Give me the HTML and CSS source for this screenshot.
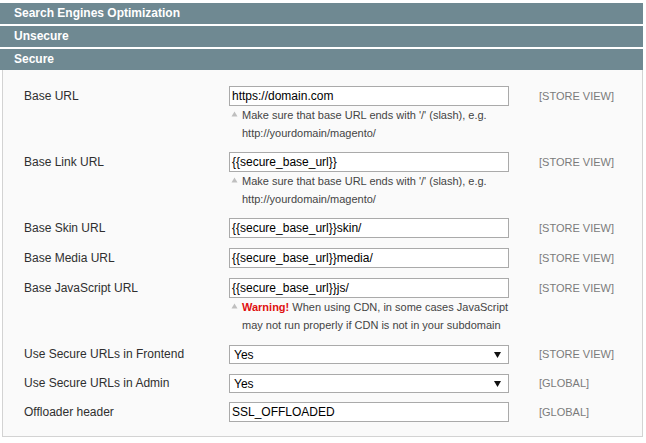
FILE: index.html
```html
<!DOCTYPE html>
<html>
<head>
<meta charset="utf-8">
<link rel="stylesheet" href="styles.css">
</head>
<body>
<div class="wrap">
  <div class="bar">Search Engines Optimization</div>
  <div class="bar">Unsecure</div>
  <div class="bar last">Secure</div>
  <div class="box">
    <div class="row">
      <div class="label">Base URL</div>
      <div class="value">
        <div class="input">https://domain.com</div>
        <div class="note"><span class="ico"><svg width="7" height="6" viewBox="0 0 7 6"><path d="M3.5 0.5 L6.5 5.5 L0.5 5.5 Z" fill="#bfbfbf"/></svg></span><span class="ntext">Make sure that base URL ends with '/' (slash), e.g. http://yourdomain/magento/</span></div>
      </div>
      <div class="scope">[STORE VIEW]</div>
    </div>
    <div class="row">
      <div class="label">Base Link URL</div>
      <div class="value">
        <div class="input">{{secure_base_url}}</div>
        <div class="note"><span class="ico"><svg width="7" height="6" viewBox="0 0 7 6"><path d="M3.5 0.5 L6.5 5.5 L0.5 5.5 Z" fill="#bfbfbf"/></svg></span><span class="ntext">Make sure that base URL ends with '/' (slash), e.g. http://yourdomain/magento/</span></div>
      </div>
      <div class="scope">[STORE VIEW]</div>
    </div>
    <div class="row">
      <div class="label">Base Skin URL</div>
      <div class="value"><div class="input">{{secure_base_url}}skin/</div></div>
      <div class="scope">[STORE VIEW]</div>
    </div>
    <div class="row">
      <div class="label">Base Media URL</div>
      <div class="value"><div class="input">{{secure_base_url}}media/</div></div>
      <div class="scope">[STORE VIEW]</div>
    </div>
    <div class="row">
      <div class="label">Base JavaScript URL</div>
      <div class="value">
        <div class="input">{{secure_base_url}}js/</div>
        <div class="note"><span class="ico"><svg width="7" height="6" viewBox="0 0 7 6"><path d="M3.5 0.5 L6.5 5.5 L0.5 5.5 Z" fill="#bfbfbf"/></svg></span><span class="ntext"><b class="warn">Warning!</b> When using CDN, in some cases JavaScript may not run properly if CDN is not in your subdomain</span></div>
      </div>
      <div class="scope">[STORE VIEW]</div>
    </div>
    <div class="row sel-row">
      <div class="label">Use Secure URLs in Frontend</div>
      <div class="value"><div class="select"><span>Yes</span><svg width="7" height="6" viewBox="0 0 7 6"><path d="M0 0 L7 0 L3.5 6 Z" fill="#111"/></svg></div></div>
      <div class="scope">[STORE VIEW]</div>
    </div>
    <div class="row sel-row">
      <div class="label">Use Secure URLs in Admin</div>
      <div class="value"><div class="select"><span>Yes</span><svg width="7" height="6" viewBox="0 0 7 6"><path d="M0 0 L7 0 L3.5 6 Z" fill="#111"/></svg></div></div>
      <div class="scope">[GLOBAL]</div>
    </div>
    <div class="row">
      <div class="label">Offloader header</div>
      <div class="value"><div class="input">SSL_OFFLOADED</div></div>
      <div class="scope">[GLOBAL]</div>
    </div>
  </div>
</div>
</body>
</html>
```

FILE: styles.css
```css
html, body {
  margin: 0;
  padding: 0;
  background: #ffffff;
}
body {
  font-family: "Liberation Sans", Arial, sans-serif;
  font-size: 12px;
  color: #2f2f2f;
}
.wrap {
  width: 643px;
  padding-top: 3px;
}
.bar {
  height: 21px;
  line-height: 21px;
  background: #6f8992;
  color: #ffffff;
  font-weight: bold;
  font-size: 12px;
  padding-left: 14px;
  margin-bottom: 2px;
}
.bar.last {
  margin-bottom: 0;
}
.box {
  margin-left: 2px;
  width: 639px;
  background: #fafafa;
  border: 1px solid #d3d3d3;
  border-top: none;
  padding: 11px 0 9px;
}
.row {
  display: grid;
  grid-template-columns: 205px 280px 1fr;
  padding: 5px 0 5px 21px;
  align-items: start;
}
.row.sel-row {
  padding-top: 6px;
  padding-bottom: 4px;
}
.label {
  line-height: 20px;
  color: #2f2f2f;
}
.sel-row .label {
  line-height: 19px;
}
.input {
  box-sizing: border-box;
  height: 20px;
  line-height: 18px;
  border: 1px solid #aaaaaa;
  background: #ffffff;
  padding: 0 2px;
  color: #000;
  font-size: 12px;
}
.select {
  box-sizing: border-box;
  height: 19px;
  border: 1px solid #aaaaaa;
  background: #ffffff;
  padding: 0 7px 0 4px;
  display: flex;
  align-items: center;
  justify-content: space-between;
  color: #000;
}
.note {
  display: flex;
  font-size: 11px;
  line-height: 18px;
  color: #444;
}
.ico {
  flex: none;
  width: 13px;
  padding-left: 2px;
  box-sizing: border-box;
  padding-top: 5px;
  line-height: 0;
}
.ntext {
  flex: 1;
}
.warn {
  color: #e01010;
}
.scope {
  margin-left: 30px;
  font-size: 11px;
  line-height: 20px;
  color: #7a7a7a;
  white-space: nowrap;
}
.sel-row .scope {
  line-height: 19px;
}
```
